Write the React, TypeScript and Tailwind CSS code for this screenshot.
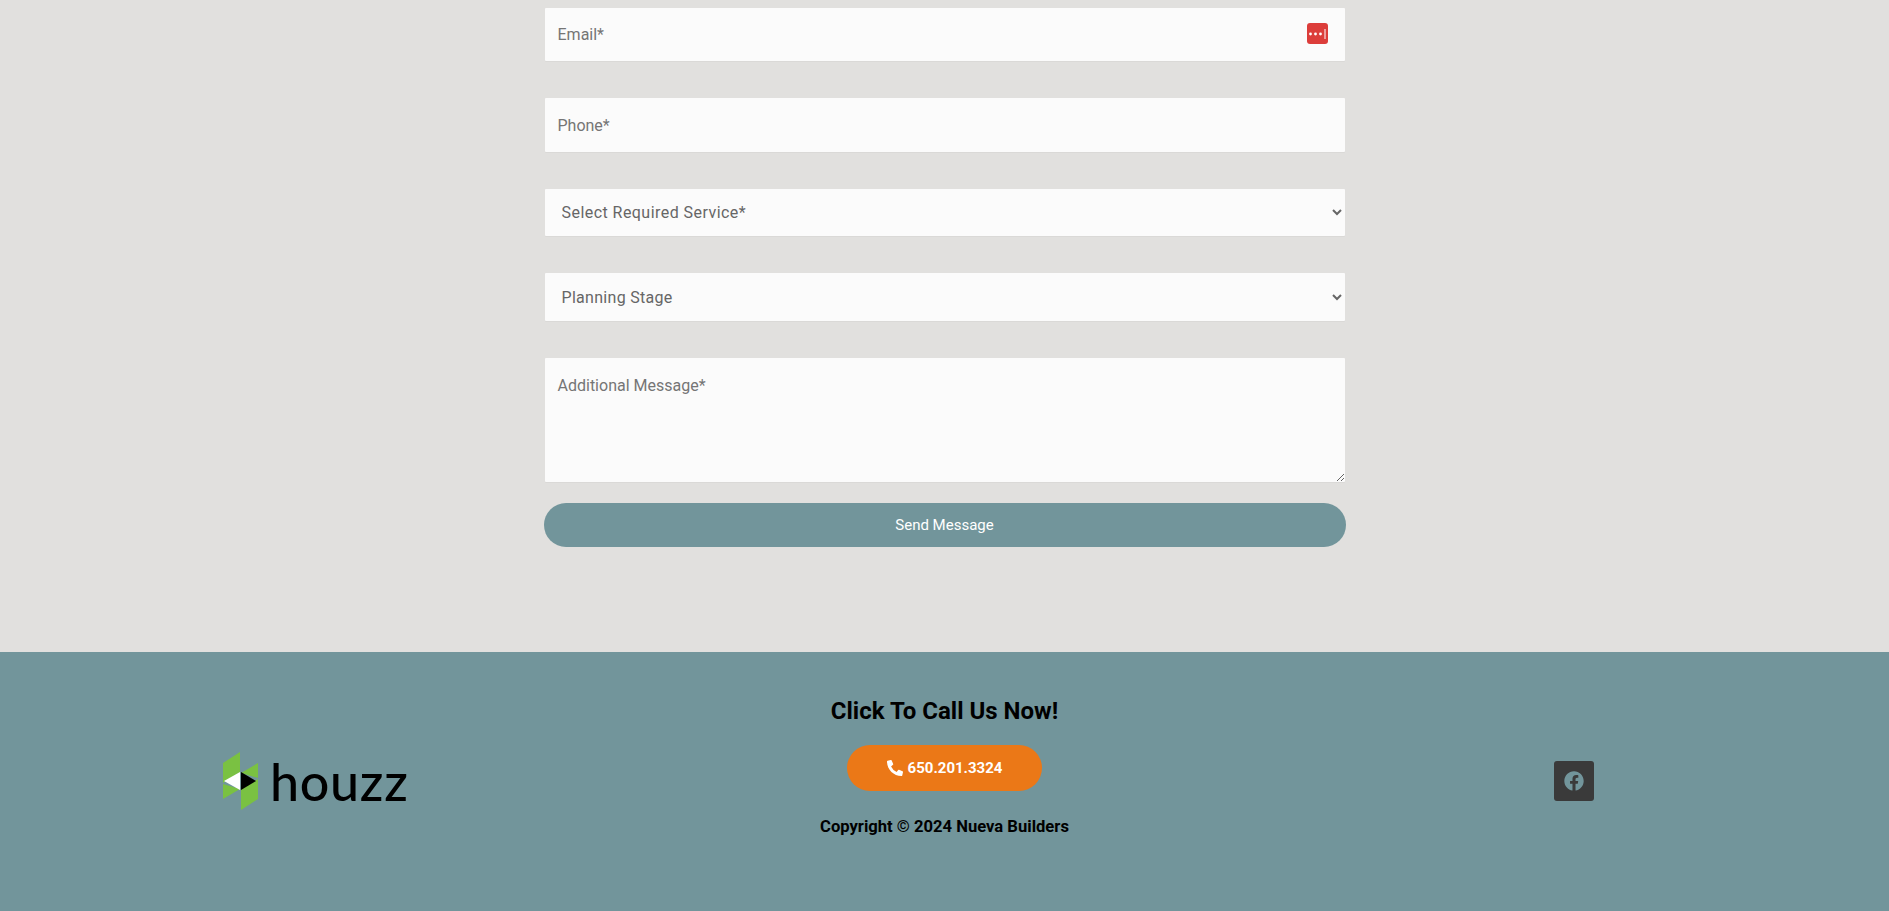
import { FaFacebook, FaPhoneAlt } from 'react-icons/fa';

const fieldClass =
  'block w-full rounded-[1px] bg-[#fbfbfb] text-[16px] text-[#666] shadow-[0_1px_1px_rgba(0,0,0,0.03)] outline-none placeholder:text-[#757575]';

function HouzzLogo() {
  return (
    <div className="flex items-center gap-[11px]">
      <svg width="36" height="58" viewBox="0 0 36 58" aria-hidden="true">
        <polygon points="0,11 17,0 17,20 0,31" fill="#7ac142" />
        <polygon points="18,37 35,27 35,47 18,58" fill="#7ac142" />
        <polygon points="18,21 35,11 35,26 18,21" fill="#7ac142" />
        <polygon points="0,32 17,37 0,47" fill="#7ac142" />
        <polygon points="1,29 17,20 17,38" fill="#fff" />
        <polygon points="18,20 33,29 18,38" fill="#000" />
      </svg>
      <span className="font-['Lato',sans-serif] text-[52px] font-medium leading-none tracking-[0.7px] text-black">houzz</span>
    </div>
  );
}

export default function App() {
  return (
    <div className="h-[911px] overflow-hidden bg-[#e1e0de] font-['Roboto',sans-serif]">
      <section className="h-[652px] pt-2">
        <form className="mx-auto flex w-[800px] flex-col">
          <div className="relative mb-[37px]">
            <input placeholder="Email*" className={`${fieldClass} h-[53px] px-[13px]`} />
            <span className="absolute right-[17px] top-[15px] flex h-[21px] w-[21px] items-center justify-center rounded-[3px] bg-[#dc3d3a]">
              <svg width="17" height="10" viewBox="0 0 17 10" aria-hidden="true">
                <circle cx="1.5" cy="5" r="1.4" fill="#fff" />
                <circle cx="6.5" cy="5" r="1.4" fill="#fff" />
                <circle cx="11.5" cy="5" r="1.4" fill="#fff" />
                <rect x="15.5" y="0" width="1" height="10" fill="#fff" />
              </svg>
            </span>
          </div>
          <input placeholder="Phone*" className={`${fieldClass} mb-[37px] h-[54px] px-[13px]`} />
          <select className={`${fieldClass} mb-[37px] h-[47px] appearance-auto pl-[13px] pr-0 tracking-[0.45px]`}>
            <option>Select Required Service*</option>
          </select>
          <select className={`${fieldClass} mb-[37px] h-[48px] appearance-auto pl-[13px] pr-0 tracking-[0.3px]`}>
            <option>Planning Stage</option>
          </select>
          <textarea placeholder="Additional Message*" className={`${fieldClass} mb-[21px] h-[124px] resize-y px-[13px] py-[16px]`} />
          <button type="button" className="-mx-px h-[44px] rounded-full bg-[#72959b] text-[15px] text-white">
            Send Message
          </button>
        </form>
      </section>
      <footer className="flex h-[259px] items-start bg-[#72959b] pl-[223px] pr-[295px]">
        <div className="w-[300px] pt-[100px]">
          <HouzzLogo />
        </div>
        <div className="flex flex-1 flex-col items-center pt-[44px]">
          <h2 className="text-[24px] font-bold leading-[30px] text-black">Click To Call Us Now!</h2>
          <a className="mt-[19px] flex h-[46px] w-[195px] items-center justify-center gap-[5px] rounded-full bg-[#eb7817] text-[15px] font-bold text-white">
            <FaPhoneAlt className="h-4 w-4" />
            650.201.3324
          </a>
          <p className="mt-[26px] text-[16.6px] font-bold leading-5 text-black">Copyright © 2024 Nueva Builders</p>
        </div>
        <div className="flex w-[228px] justify-end pt-[109px]">
          <span className="flex h-10 w-10 items-center justify-center rounded-[3px] bg-[#3a3a3a] text-[#72959b]">
            <FaFacebook className="h-5 w-5" />
          </span>
        </div>
      </footer>
    </div>
  );
}
